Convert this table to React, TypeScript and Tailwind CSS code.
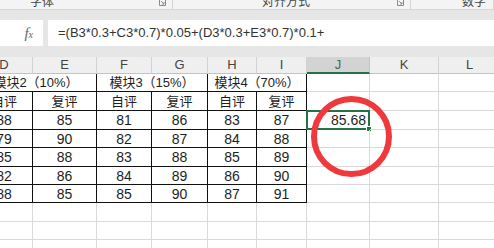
import type { ReactNode } from 'react';

const GRID = '#d9d9d9';
const LINE = '#111111';

type Cell = { text?: string; span?: number; table?: boolean; cjk?: boolean; align?: 'right'; selected?: boolean };

const headers = ['D', 'E', 'F', 'G', 'H', 'I', 'J', 'K', 'L'];

const scores = [
  ['88', '85', '81', '86', '83', '87'],
  ['79', '90', '82', '87', '84', '88'],
  ['85', '88', '83', '88', '85', '89'],
  ['82', '86', '84', '89', '86', '90'],
  ['88', '85', '85', '90', '87', '91'],
];

const empty3 = (): Cell[] => [{}, {}, {}];

function buildRows(): Cell[][] {
  const rows: Cell[][] = [];
  rows.push([
    { text: '模块2（10%）', span: 2, table: true, cjk: true },
    { text: '模块3（15%）', span: 2, table: true, cjk: true },
    { text: '模块4（70%）', span: 2, table: true, cjk: true },
    ...empty3(),
  ]);
  rows.push([
    ...['自评', '复评', '自评', '复评', '自评', '复评'].map((t) => ({ text: t, table: true, cjk: true })),
    ...empty3(),
  ]);
  scores.forEach((r, i) => {
    rows.push([
      ...r.map((t) => ({ text: t, table: true })),
      i === 0 ? { text: '85.68', align: 'right' as const, selected: true } : {},
      {},
      {},
    ]);
  });
  for (let i = 0; i < 4; i++) rows.push(Array.from({ length: 9 }, () => ({})));
  return rows;
}

function Launcher() {
  return (
    <svg width="7" height="7" viewBox="0 0 7 7" className="mb-[3px]">
      <path d="M0.5 0.5h6v6h-6z" fill="none" stroke="#8a8a8a" strokeWidth="1" />
      <path d="M2 2l3 3M5 3v2H3" fill="none" stroke="#8a8a8a" strokeWidth="0.9" />
    </svg>
  );
}

function Group({ label, width, pl, children }: { label: string; width?: string; pl: string; children?: ReactNode }) {
  return (
    <div className={`${width ?? 'flex-1'} ${pl} pr-[6px] flex items-end justify-between border-r border-[#d4d4d4]`}>
      <span className="text-[12px] leading-[14px] text-[#444]">{label}</span>
      {children}
    </div>
  );
}

export default function App() {
  const rows = buildRows();

  return (
    <div className="relative w-[494px] h-[248px] overflow-hidden bg-white font-['Liberation_Sans','Noto_Sans_CJK_SC',sans-serif]">
      {/* ribbon group labels, cut off at the top */}
      <div className="h-[10px] bg-[#f4f4f4] border-b border-[#d6d6d6] flex overflow-hidden">
        <Group label="字体" width="w-[173px]" pl="pl-[30px]">
          <Launcher />
        </Group>
        <Group label="对齐方式" width="w-[238px]" pl="pl-[89px]">
          <Launcher />
        </Group>
        <Group label="数字" pl="pl-[51px]" />
      </div>

      {/* formula bar */}
      <div className="bg-[#e6e6e6] pt-[10px] pb-[11px]">
        <div className="h-[26px] flex gap-[5px]">
          <div className="w-[43px] bg-white flex items-center justify-end pr-[10px]">
            <span className="italic font-['Liberation_Serif',serif] text-[15px] text-[#666] leading-none">
              f<span className="text-[10px]">x</span>
            </span>
          </div>
          <div className="flex-1 bg-white flex items-center pl-[10px] text-[13px] text-[#333]">
            =(B3*0.3+C3*0.7)*0.05+(D3*0.3+E3*0.7)*0.1+
          </div>
        </div>
      </div>

      {/* sheet */}
      <div className="ml-[-24px] grid grid-cols-[57px_64px_55px_56px_49px_50px_63px_69px_62px] grid-rows-[17px_18px_19px_19px_18px_19px_18px_18px_19px_18px_18px]">
        {headers.map((h) => (
          <div
            key={h}
            className={
              h === 'J'
                ? 'bg-[#d3d3d3] border-r border-[#c4c4c4] border-b-2 border-b-[#217346] flex items-center justify-center text-[13px] text-[#3d6b4f]'
                : 'bg-[#efefef] border-r border-[#d2d2d2] border-b border-b-[#c4c4c4] flex items-center justify-center text-[13px] text-[#444]'
            }
          >
            {h}
          </div>
        ))}
        {rows.map((row, ri) =>
          row.map((c, ci) => {
            const color = c.table ? LINE : GRID;
            return (
              <div
                key={`${ri}-${ci}`}
                className={`relative flex items-center ${c.span === 2 ? 'col-span-2' : ''} ${
                  c.align === 'right' ? 'justify-end pr-[3px]' : 'justify-center'
                } ${c.cjk ? 'text-[13px]' : 'text-[14px]'} text-[#1e1e1e] leading-none`}
                style={{ borderRight: `1px solid ${color}`, borderBottom: `1px solid ${color}` }}
              >
                {c.text}
                {c.selected && (
                  <div className="absolute -left-[1px] -top-[1px] -right-[1px] -bottom-[1px] border-2 border-[#217346]">
                    <div className="absolute -right-[4px] -bottom-[4px] w-[6px] h-[6px] bg-[#217346] border border-white" />
                  </div>
                )}
              </div>
            );
          })
        )}
      </div>

      {/* red annotation circle */}
      <svg className="absolute left-[311px] top-[96px]" width="81" height="81" viewBox="0 0 81 81">
        <circle cx="40.5" cy="40.5" r="37.5" fill="none" stroke="#f0393d" strokeWidth="6" />
      </svg>
    </div>
  );
}
